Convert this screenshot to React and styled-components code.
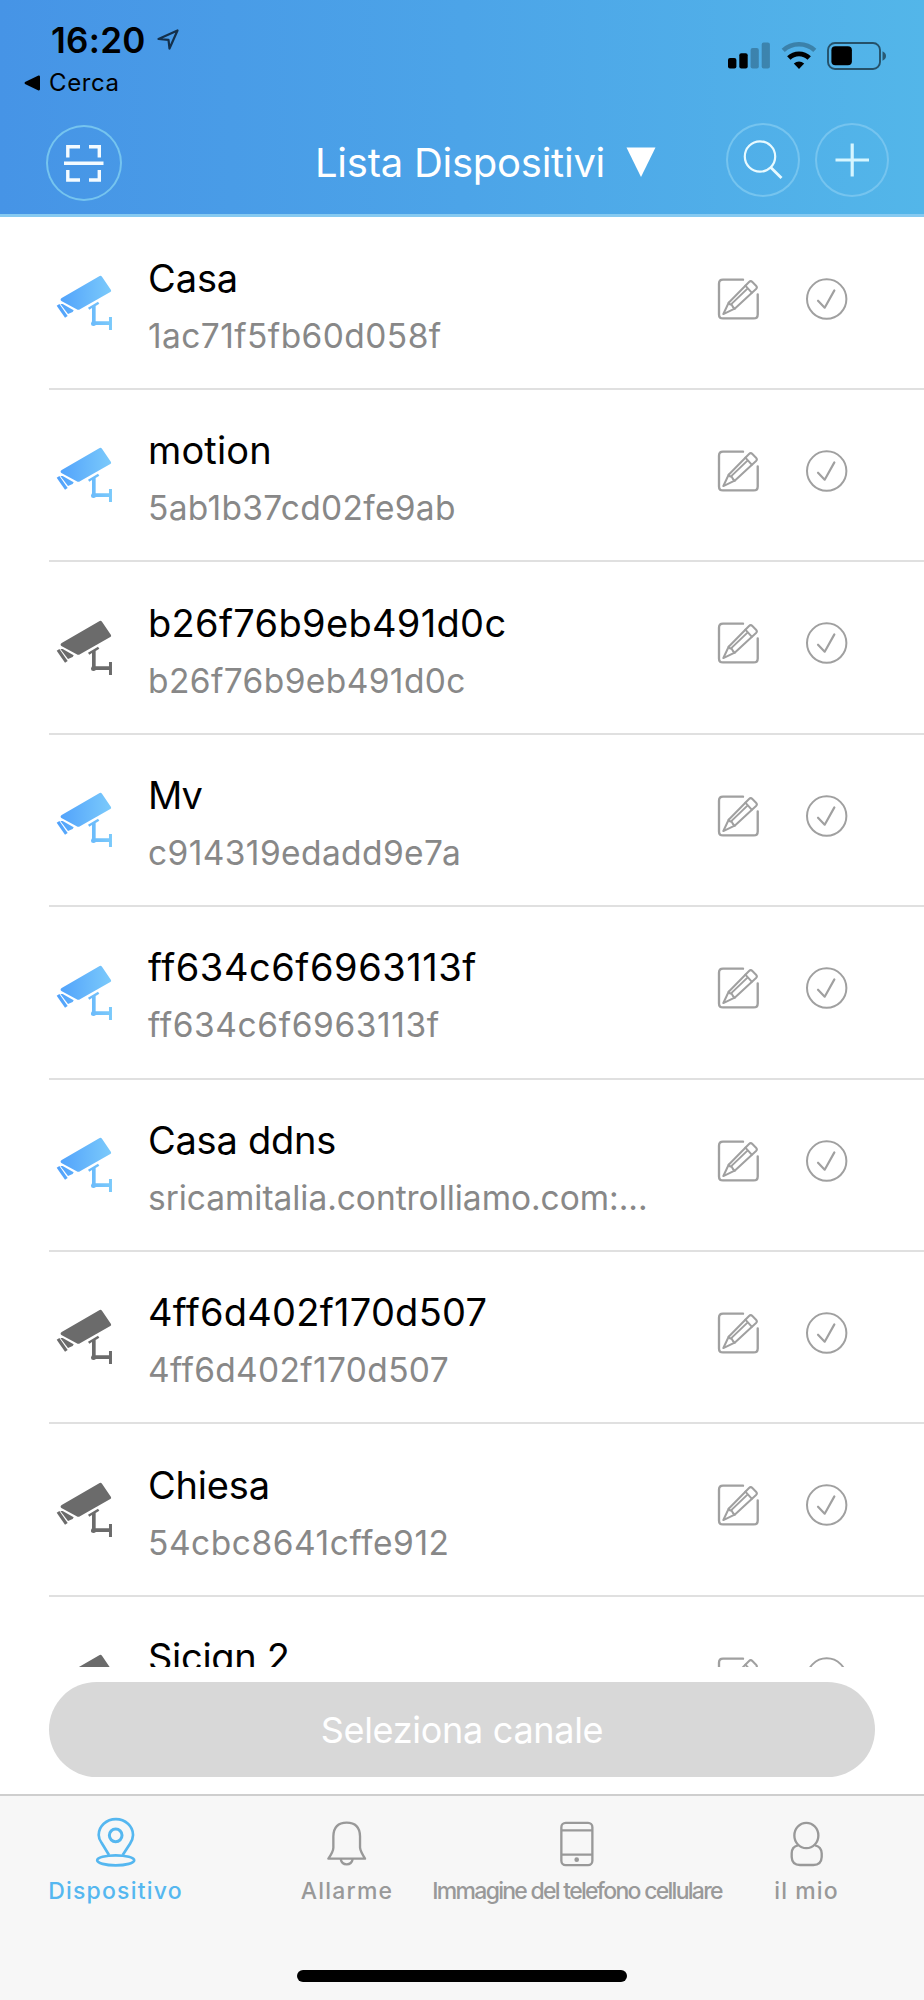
import { useState } from 'react';
// css
import styled, { createGlobalStyle } from 'styled-components';

const devices = [
  { name: 'Casa', id: '1ac71f5fb60d058f', online: true, nameSpacing: -0.1, idSpacing: 0.42 },
  { name: 'motion', id: '5ab1b37cd02fe9ab', online: true, nameSpacing: 0.15, idSpacing: 0.3 },
  { name: 'b26f76b9eb491d0c', id: 'b26f76b9eb491d0c', online: false, nameSpacing: 0.32, idSpacing: 0.4 },
  { name: 'Mv', id: 'c914319edadd9e7a', online: true, nameSpacing: -1, idSpacing: 0.4 },
  { name: 'ff634c6f6963113f', id: 'ff634c6f6963113f', online: true, nameSpacing: 0.55, idSpacing: 0.6 },
  { name: 'Casa ddns', id: 'sricamitalia.controlliamo.com:...', online: true, nameSpacing: -0.25, idSpacing: -0.04 },
  { name: '4ff6d402f170d507', id: '4ff6d402f170d507', online: false, nameSpacing: 0.25, idSpacing: 0.34 },
  { name: 'Chiesa', id: '54cbc8641cffe912', online: false, nameSpacing: -0.2, idSpacing: 0.54 },
  { name: 'Sicign 2', id: '', online: false, nameSpacing: -0.3, idSpacing: 0 },
];

const tabs = [
  { label: 'Dispositivo', icon: 'pin', spacing: '1.2px' },
  { label: 'Allarme', icon: 'bell', spacing: '1.2px' },
  { label: 'Immagine del telefono cellulare', icon: 'phone', spacing: '-1.72px' },
  { label: 'il mio', icon: 'user', spacing: '1.1px' },
];

const CameraIcon = ({ online }) => (
  <CameraSvg viewBox="78 132 174 172" fill={online ? 'url(#cam)' : '#6b6b6b'}>
    <defs>
      <linearGradient id="cam" gradientUnits="userSpaceOnUse" x1="80" y1="0" x2="248" y2="0">
        <stop offset="0" stopColor="#4fa0fb" />
        <stop offset="1" stopColor="#7ccbfb" />
      </linearGradient>
    </defs>
    <path d="M95 204 L209 138 Q213 136 216 140 L243 180 Q245 184 241 186 L150 238 Q145 241 140 238 L94 213 Q89 208 95 204 Z" />
    <path d="M80 227 L88 222 L113 258 L105 263 Z" />
    <path d="M91 222 L98 222 L131 241 L128 246 L114 252 Z" />
    <path d="M174 233 L204 215 L208 221 L197 228 L197 274 L237 274 L237 261 L246 261 L246 300 L237 300 L237 285 L198 285 Q191 291 184 286 Q181 280 186 274 L186 234 L178 239 Z" />
  </CameraSvg>
);

const EditIcon = () => (
  <ActionSvg viewBox="110 110 130 130">
    <path d="M188 118 H128 Q116 118 116 130 V222 Q116 234 128 234 H220 Q232 234 232 222 V162" strokeWidth="7" />
    <path d="M129 221 L145 187 L206 125 Q211 120 216 125 L227 136 Q232 141 227 146 L163 205 Z" />
    <path d="M145 187 Q149 194 154 193 Q157 201 163 205 M195 136 L214 157 M152 192 L202 144" />
  </ActionSvg>
);

const CheckIcon = () => (
  <ActionSvg viewBox="374 110 130 130">
    <circle cx="439" cy="176" r="59" />
    <path d="M413 181 L433 202 L462 150" strokeWidth="6.5" />
  </ActionSvg>
);

const TabIcon = ({ name }) => {
  if (name === 'pin') {
    return (
      <TabSvg viewBox="282 110 130 152" strokeWidth="8">
        <path d="M327 224 L305 188 Q296 176 296 164 A51 47 0 0 1 399 164 Q399 176 390 190 L368 224" />
        <circle cx="347" cy="165" r="19" strokeWidth="9" />
        <ellipse cx="347" cy="240" rx="55.5" ry="15" />
      </TabSvg>
    );
  }
  if (name === 'bell') {
    return (
      <TabSvg viewBox="977 110 130 152" strokeWidth="7">
        <path d="M987 235 Q1002 213 1002 202 V168 Q1003 127 1042 127 Q1081 127 1082 168 V202 Q1083 213 1097 235 Z" />
        <path d="M1024 236 Q1027 252 1042 252 Q1057 252 1060 236" />
      </TabSvg>
    );
  }
  if (name === 'phone') {
    return (
      <TabSvg viewBox="464 110 130 152" strokeWidth="7">
        <rect x="483" y="127.5" width="93" height="127" rx="13" />
        <path d="M483 150 H576 M483 223 H576" />
        <circle cx="529" cy="238" r="3.5" fill="currentColor" />
      </TabSvg>
    );
  }
  return (
    <TabSvg viewBox="1151 110 130 152" strokeWidth="7">
      <ellipse cx="1215" cy="165.5" rx="36" ry="38" />
      <path d="M1190 195 Q1171 199 1171 219 V230 Q1172 254 1196 254 H1236 Q1260 254 1261 230 V219 Q1260 199 1241 195" />
    </TabSvg>
  );
};

const StatusBar = () => (
  <Status>
    <StatusLeft>
      <Clock>
        <span>16:20</span>
        <svg width="22" height="22" viewBox="0 0 22 22">
          <path d="M1.5 10 L20.5 1.5 L12.5 19.5 L11.5 10.8 Z" fill="none" stroke="#14304b" strokeWidth="2.2" strokeLinejoin="round" />
        </svg>
      </Clock>
      <BackLink>
        <svg width="16" height="16" viewBox="0 0 16 16">
          <path d="M1 7 L14.5 0.6 Q16 0.3 16 2 V14 Q16 15.7 14.5 15.4 L1 9 Q0 8 1 7 Z" />
        </svg>
        Cerca
      </BackLink>
    </StatusLeft>
    <StatusRight>
      <svg width="42" height="28" viewBox="0 0 42 28">
        <rect x="0" y="16" width="8.4" height="10.5" rx="2" />
        <rect x="11.3" y="11.3" width="8.4" height="15.2" rx="2" />
        <g opacity=".25">
          <rect x="22.6" y="6" width="8.2" height="20.5" rx="2" />
          <rect x="33.7" y="0.6" width="8.2" height="25.9" rx="2" />
        </g>
      </svg>
      <svg width="36" height="28" viewBox="0 0 36 28">
        <path d="M2.2 8.4 A23.5 23.5 0 0 1 33.8 8.4" fill="none" stroke="#000" strokeOpacity=".27" strokeWidth="4.6" />
        <path d="M7.8 16 A14.5 14.5 0 0 1 28.2 16" fill="none" stroke="#000" strokeWidth="4.8" />
        <path d="M18 27 L12.8 21.6 Q18 17.2 23.2 21.6 Z" />
      </svg>
      <svg width="60" height="28" viewBox="0 0 60 28">
        <rect x="1" y="1" width="52" height="26" rx="7" fill="none" stroke="#000" strokeOpacity=".55" strokeWidth="1.9" />
        <rect x="4.4" y="4.2" width="20.5" height="19" rx="4" />
        <path d="M55.5 9.3 Q59 11 59 14 Q59 17 55.5 18.7 Z" fillOpacity=".5" />
      </svg>
    </StatusRight>
  </Status>
);

export default function App() {
  const [active, setActive] = useState('Dispositivo');

  return (
    <Screen>
      <GlobalStyle />
      <Header>
        <StatusBar />
        <NavBar>
          <ScanButton $size="76px" aria-label="scan">
            <svg width="76" height="76" viewBox="0 0 76 76" fill="none" stroke="#f4fbff" strokeWidth="3.4">
              <path d="M21.8 32.5 V21.8 H34 M43 21.8 H53.3 V32.5 M21.8 45 V55 H34 M43 55 H53.3 V45" />
              <path d="M18 38.3 H57.5" />
            </svg>
          </ScanButton>
          <Title>
            <span>Lista Dispositivi</span>
            <svg width="30" height="30" viewBox="0 0 30 30">
              <path d="M0.5 0.5 H29.5 L15 30 Z" fill="#fff" />
            </svg>
          </Title>
          <NavActions>
            <RoundButton $size="74px" aria-label="search">
              <svg width="74" height="74" viewBox="0 0 74 74" fill="none" stroke="#e8faff" strokeWidth="2.2">
                <circle cx="34" cy="33.5" r="15.2" />
                <path d="M44.3 44 L55.5 55" strokeWidth="2.8" />
              </svg>
            </RoundButton>
            <RoundButton $size="74px" aria-label="add">
              <svg width="74" height="74" viewBox="0 0 74 74" stroke="#d6f6ff" strokeWidth="3.2">
                <path d="M20.5 37 H54 M37.2 20.5 V53.5" />
              </svg>
            </RoundButton>
          </NavActions>
        </NavBar>
      </Header>

      <DeviceList>
        {devices.map((device) => (
          <DeviceRow key={device.name}>
            <CameraIcon online={device.online} />
            <DeviceText>
              <DeviceName $spacing={device.nameSpacing}>{device.name}</DeviceName>
              <DeviceId $spacing={device.idSpacing}>{device.id}</DeviceId>
            </DeviceText>
            <Actions>
              <EditIcon />
              <CheckIcon />
            </Actions>
          </DeviceRow>
        ))}
      </DeviceList>

      <ChannelButton disabled>Seleziona canale</ChannelButton>

      <Footer>
        <TabBar>
          {tabs.map((tab) => (
            <Tab
              key={tab.label}
              $active={active === tab.label}
              $spacing={tab.spacing}
              onClick={() => { setActive(tab.label) }}
            >
              <TabIcon name={tab.icon} />
              <span>{tab.label}</span>
            </Tab>
          ))}
        </TabBar>
        <HomeIndicator />
      </Footer>
    </Screen>
  );
}

const GlobalStyle = createGlobalStyle`
  * {
    box-sizing: border-box;
  }
  body {
    margin: 0;
    background: #fff;
  }
  button {
    border: none;
    background: none;
    padding: 0;
    margin: 0;
    font-family: inherit;
  }
  svg {
    display: block;
    flex-shrink: 0;
  }
`;

const Screen = styled.main`
  width: 924px;
  height: 2000px;
  overflow: hidden;
  display: flex;
  flex-direction: column;
  background: #fff;
  font-family: Inter, "Liberation Sans", sans-serif;
`;

const Header = styled.header`
  height: 217px;
  flex-shrink: 0;
  display: flex;
  flex-direction: column;
  background: linear-gradient(90deg, #4694e6 0%, #4ca4e8 50%, #53b6e9 100%);
  border-bottom: 3px solid #86caf1;
`;

const Status = styled.div`
  height: 122px;
  display: flex;
  justify-content: space-between;
`;

const StatusLeft = styled.div`
  padding: 18px 0 0 24px;
`;

const Clock = styled.div`
  display: flex;
  align-items: center;
  gap: 11px;
  height: 44px;
  padding-left: 27px;
  font-size: 35px;
  font-weight: 600;
  line-height: 44px;
  span {
    width: 95px;
    letter-spacing: 0.3px;
  }
`;

const BackLink = styled.div`
  display: flex;
  align-items: center;
  gap: 9px;
  margin-top: 6px;
  font-size: 24px;
  line-height: 30px;
  letter-spacing: 0.6px;
`;

const StatusRight = styled.div`
  display: flex;
  gap: 10.5px;
  padding: 42px 37px 0 0;
`;

const NavBar = styled.div`
  display: flex;
  padding: 1px 35px 0 46px;
`;

const RoundButton = styled.button`
  display: flex;
  align-items: center;
  justify-content: center;
  width: ${(props) => props.$size};
  height: ${(props) => props.$size};
  border-radius: 50%;
  box-shadow: inset 0 0 0 2px #75c4ef;
`;

const ScanButton = styled(RoundButton)`
  margin-top: 1.5px;
`;

const Title = styled.h1`
  display: flex;
  align-items: center;
  gap: 20.5px;
  height: 78px;
  margin: 0 0 0 193px;
  font-size: 40px;
  font-weight: 400;
  letter-spacing: -0.25px;
  color: #fff;
`;

const NavActions = styled.div`
  display: flex;
  gap: 15px;
  margin-left: auto;
`;

const DeviceList = styled.section`
  height: 1450px;
  flex-shrink: 0;
  overflow: hidden;
  padding: 0.6px 0 0 49px;
`;

const DeviceRow = styled.div`
  display: flex;
  height: 172.4px;
  border-bottom: 2px solid #e0e0e0;
`;

const CameraSvg = styled.svg`
  width: 58px;
  height: 57.3px;
  margin: 56.4px 0 0 7px;
`;

const DeviceText = styled.div`
  flex: 1;
  padding: 37.2px 0 0 34px;
  white-space: nowrap;
`;

const DeviceName = styled.div`
  font-size: 38px;
  line-height: 46px;
  letter-spacing: ${(props) => props.$spacing}px;
  color: #000;
`;

const DeviceId = styled.div`
  margin-top: 15px;
  font-size: 33.5px;
  line-height: 40px;
  letter-spacing: ${(props) => props.$spacing}px;
  color: #888;
`;

const Actions = styled.div`
  display: flex;
  gap: 44.6px;
  padding: 59px 76px 0 0;
`;

const ActionSvg = styled.svg`
  width: 43.4px;
  height: 43.4px;
  fill: none;
  stroke: #a0a0a0;
  stroke-width: 6;
  stroke-linecap: round;
  stroke-linejoin: round;
`;

const ChannelButton = styled.button`
  height: 95px;
  flex-shrink: 0;
  margin: 15px 49px 17px;
  border-radius: 48px;
  background: #d8d8d8;
  color: #fff;
  font-size: 36px;
  font-weight: 400;
  letter-spacing: -0.3px;
`;

const Footer = styled.footer`
  flex: 1;
  border-top: 2px solid #cecece;
  background: #f7f7f7;
`;

const TabBar = styled.nav`
  display: grid;
  grid-template-columns: 231px 232px 228px 231px;
  height: 174px;
`;

const Tab = styled.button`
  display: flex;
  flex-direction: column;
  align-items: center;
  padding-top: 20.6px;
  color: ${(props) => (props.$active ? '#55b7f0' : '#999')};
  font-size: 23px;
  font-weight: 500;
  line-height: 28px;
  letter-spacing: ${(props) => props.$spacing};
  white-space: nowrap;
  span {
    margin-top: 10px;
  }
`;

const TabSvg = styled.svg`
  width: 43.4px;
  height: 50.7px;
  fill: none;
  stroke: currentColor;
  stroke-linejoin: round;
`;

const HomeIndicator = styled.div`
  width: 330px;
  height: 12px;
  margin: 0 auto;
  border-radius: 6px;
  background: #000;
`;
